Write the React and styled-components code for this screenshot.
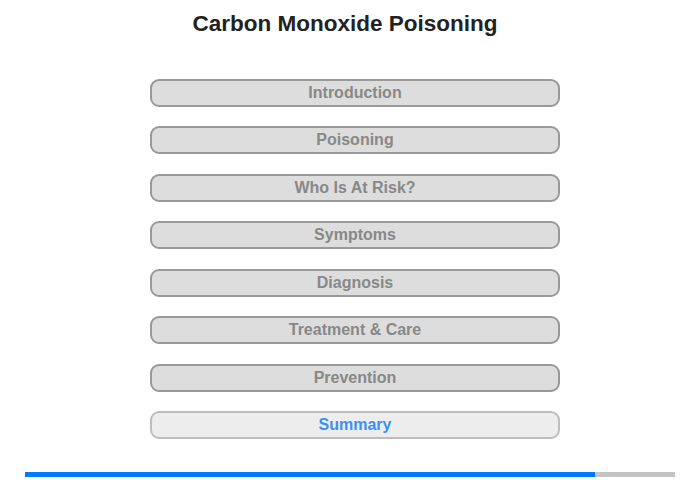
import React from "react";
import styled, { createGlobalStyle } from "styled-components";

const Global = createGlobalStyle`
  html, body { margin: 0; padding: 0; background: #fff; }
  body { font-family: "Liberation Sans", Arial, sans-serif; }
`;

const Page = styled.div`
  width: 700px;
  height: 480px;
  display: flex;
  flex-direction: column;
  align-items: center;
`;

const Title = styled.h1`
  margin: 11px 10px 0 0;
  font-size: 22.5px;
  line-height: 26px;
  font-weight: bold;
  color: #222;
`;

const Menu = styled.nav`
  margin: 41.5px 0 0 10px;
  display: flex;
  flex-direction: column;
  gap: 19.5px;
  width: 410px;
`;

const Item = styled.div`
  box-sizing: border-box;
  height: 28px;
  border: 2px solid ${(p) => (p.$active ? "#bdbdbd" : "#999")};
  border-radius: 9px;
  background: ${(p) => (p.$active ? "#ededed" : "#ddd")};
  color: ${(p) => (p.$active ? "#3d8ff5" : "#888")};
  font-size: 16px;
  font-weight: bold;
  display: flex;
  align-items: center;
  justify-content: center;
`;

const Progress = styled.div`
  margin-top: 33px;
  width: 650px;
  height: 5px;
  background: #c4c4c4;
  display: flex;
`;

const Fill = styled.div`
  height: 100%;
  background: #007bff;
`;

const items = [
  "Introduction",
  "Poisoning",
  "Who Is At Risk?",
  "Symptoms",
  "Diagnosis",
  "Treatment & Care",
  "Prevention",
  "Summary",
];

export default function App() {
  return (
    <>
      <Global />
      <Page>
        <Title>Carbon Monoxide Poisoning</Title>
        <Menu>
          {items.map((t, i) => (
            <Item key={t} $active={i === items.length - 1}>
              {t}
            </Item>
          ))}
        </Menu>
        <Progress>
          <Fill style={{ width: `${(570 / 650) * 100}%` }} />
        </Progress>
      </Page>
    </>
  );
}
